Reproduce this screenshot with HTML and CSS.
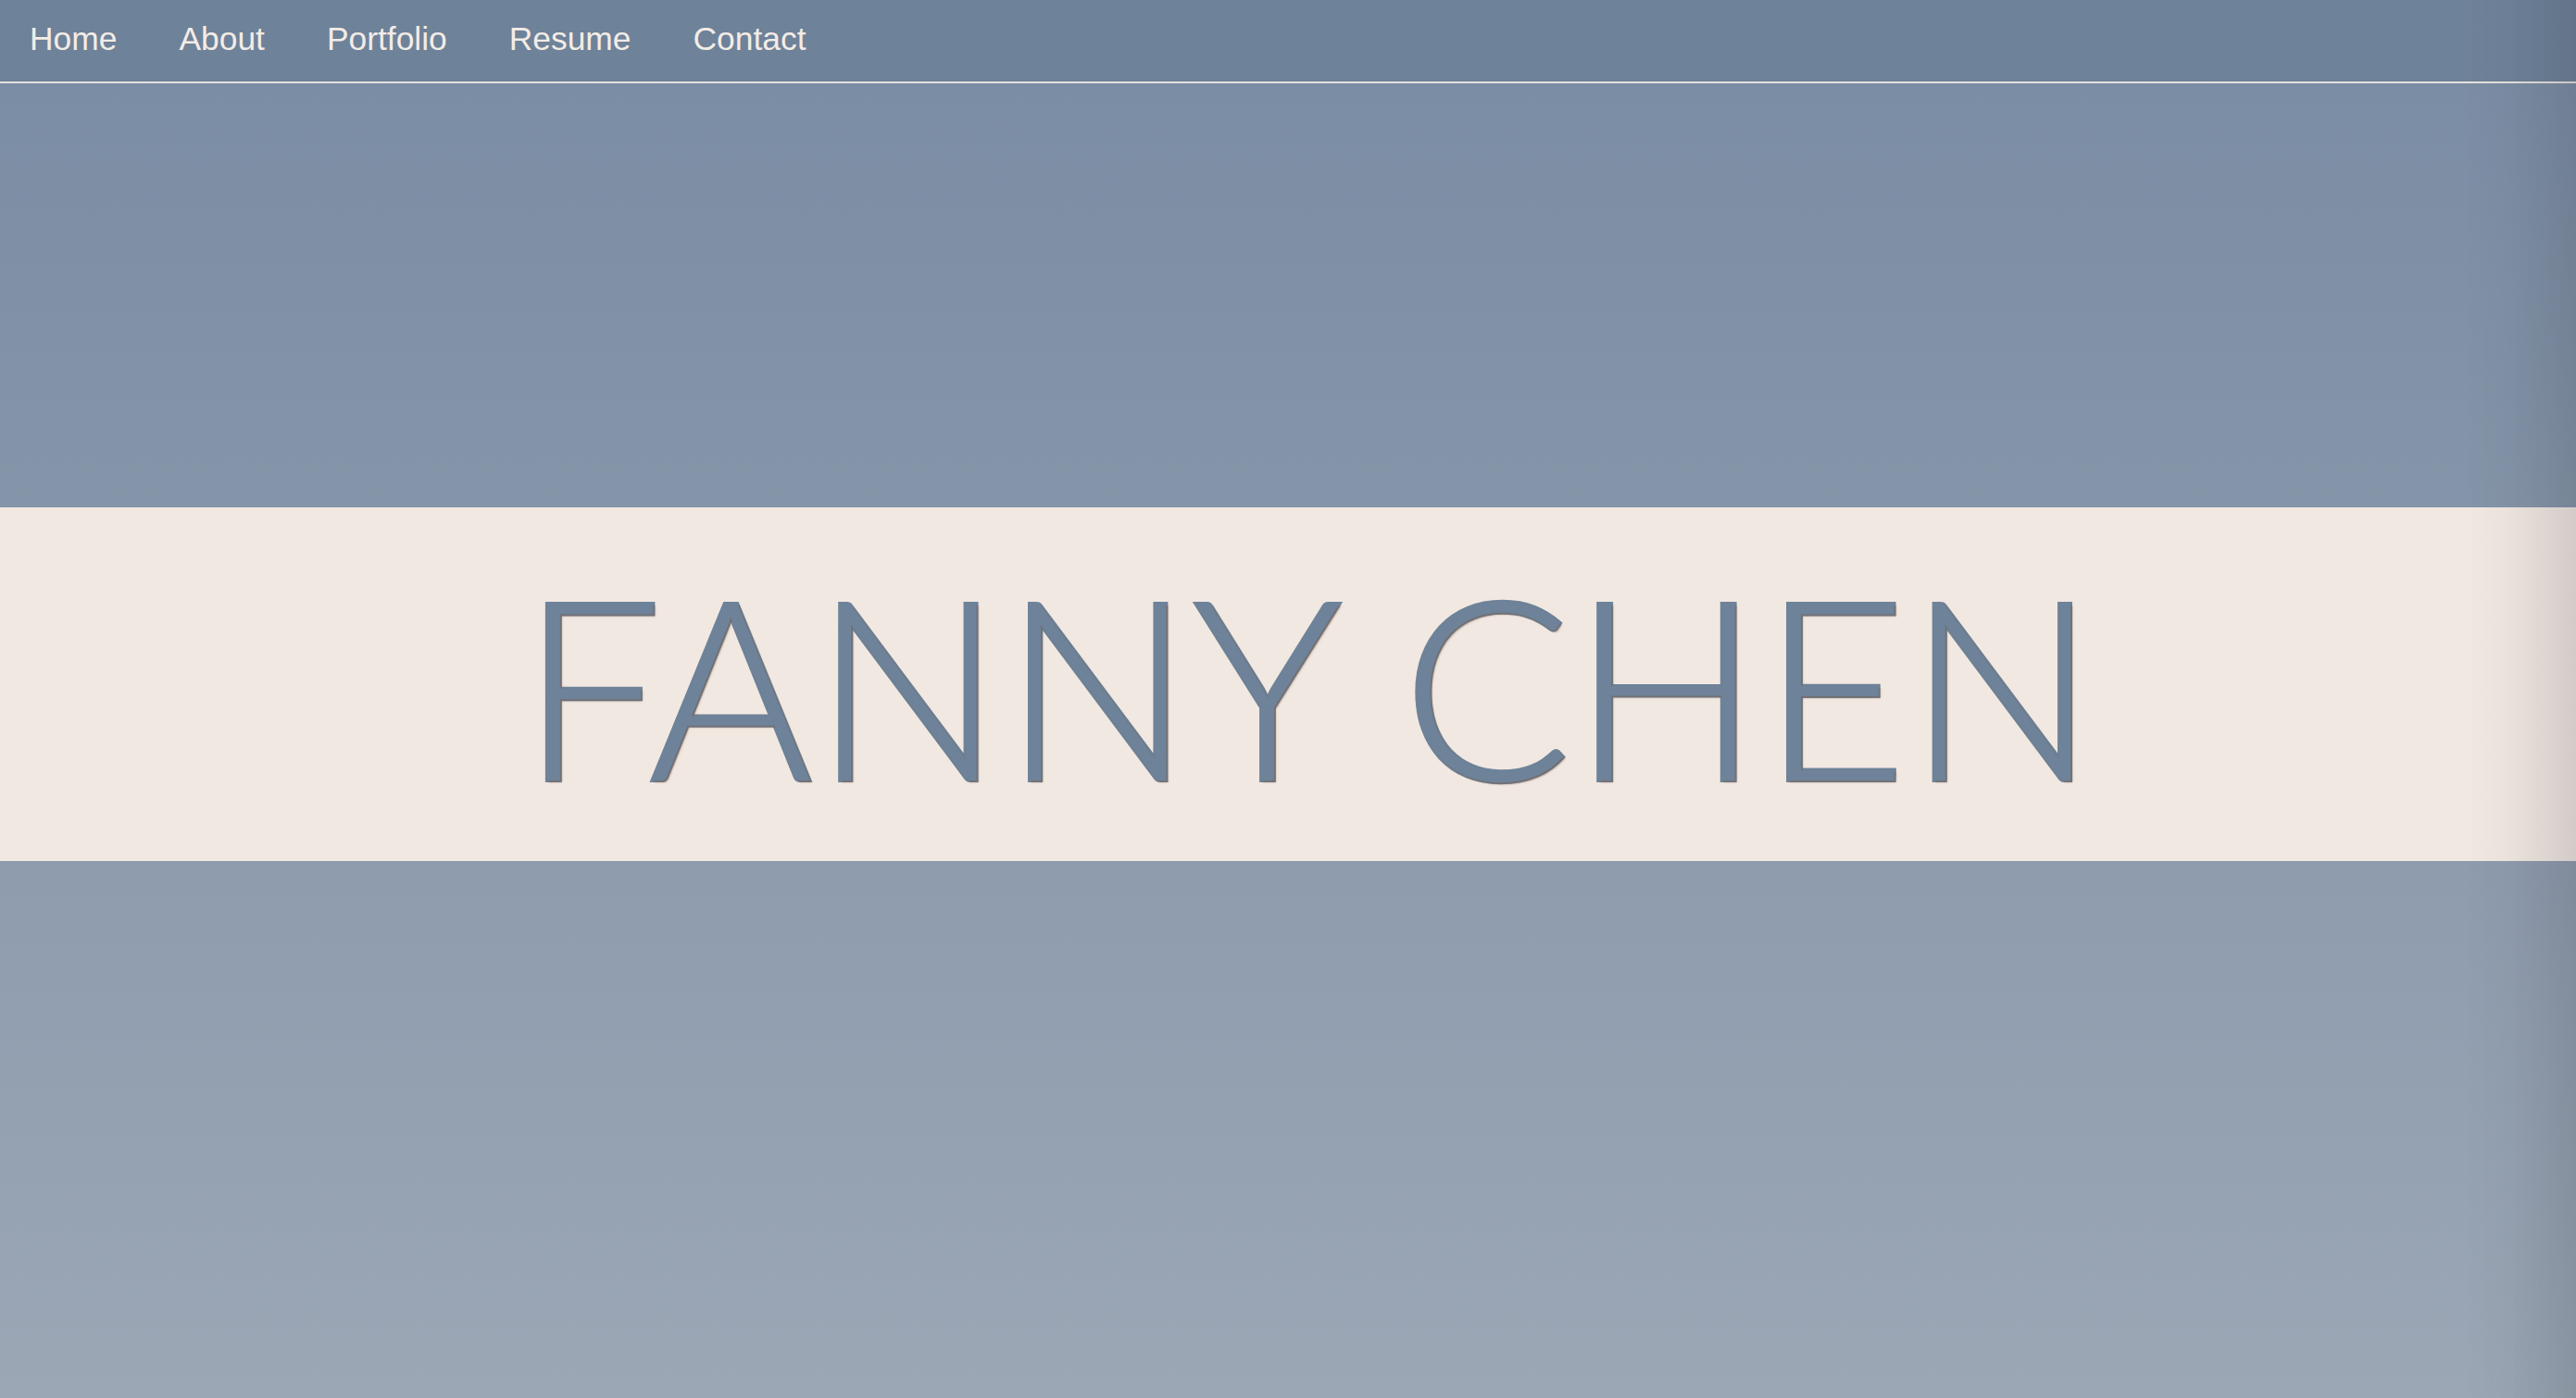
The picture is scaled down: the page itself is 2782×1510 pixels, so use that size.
FILE: index.html
```html
<!DOCTYPE html>
<html lang="en">
<head>
<meta charset="utf-8">
<title>Fanny Chen</title>
<link rel="stylesheet" href="styles.css">
</head>
<body>
<header class="topbar">
  <nav class="nav">
    <a class="nav-link" href="#">Home</a>
    <a class="nav-link" href="#">About</a>
    <a class="nav-link" href="#">Portfolio</a>
    <a class="nav-link" href="#">Resume</a>
    <a class="nav-link" href="#">Contact</a>
  </nav>
</header>
<main class="hero">
  <section class="band">
    <h1 class="name">FANNY CHEN</h1>
  </section>
</main>
<div class="edge-shade"></div>
</body>
</html>
```
FILE: styles.css
```css
html, body {
  margin: 0;
  padding: 0;
  height: 100%;
}
body {
  background: #9aa6b4;
  overflow: hidden;
  font-family: "Liberation Sans", Arial, sans-serif;
}
.topbar {
  height: 88px;
  background: #6e8299;
  border-bottom: 2px solid #e6e2de;
}
.nav {
  display: flex;
  gap: 67px;
  padding: 0 0 3px 32px;
  height: 85px;
  align-items: center;
}
.nav-link {
  color: #f3ece6;
  text-decoration: none;
  font-size: 35.4px;
  line-height: 85px;
}
.hero {
  height: 1420px;
  padding-top: 458px;
  box-sizing: border-box;
  background: linear-gradient(180deg, #7b8da4 0%, #8595a9 32%, #8f9cae 60%, #9ba7b5 100%);
}
.band {
  height: 382px;
  background: #f1e8e2;
  display: flex;
  justify-content: center;
}
.name {
  margin: 0;
  padding-left: 46px;
  font-family: Lato, "Noto Sans", sans-serif;
  font-weight: 300;
  font-size: 270px;
  line-height: 382px;
  letter-spacing: 1px;
  color: #6e8399;
  -webkit-text-stroke: 4px #6e8399;
  paint-order: stroke fill;
  text-shadow: 2px 2px 2px rgba(120, 95, 80, 0.55);
  white-space: nowrap;
}
.edge-shade {
  position: fixed;
  top: 0;
  right: 0;
  width: 120px;
  height: 100%;
  pointer-events: none;
  background: linear-gradient(90deg, rgba(40, 40, 50, 0) 0%, rgba(40, 40, 50, 0.03) 40%, rgba(40, 40, 50, 0.15) 100%);
}
```
